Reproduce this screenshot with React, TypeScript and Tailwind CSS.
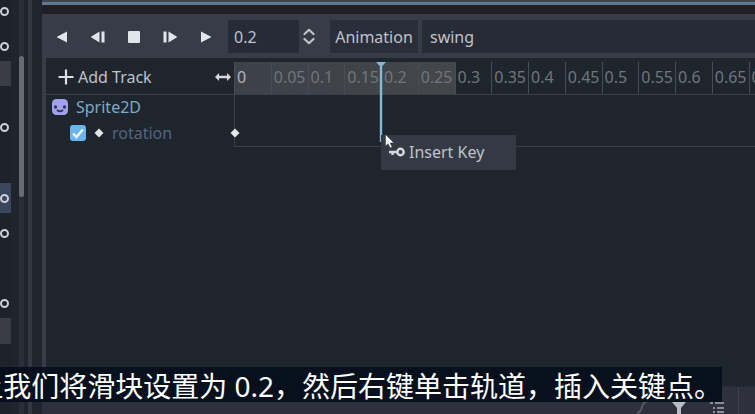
import React from "react";

const TICKS = [
  "0", "0.05", "0.1", "0.15", "0.2", "0.25", "0.3", "0.35",
  "0.4", "0.45", "0.5", "0.55", "0.6", "0.65", "0.7", "0.75",
];

const DOCK_ROWS: { size: string; dot: boolean }[] = [
  { size: "h-[22px]", dot: true },
  { size: "h-[9px]", dot: false },
  { size: "h-[30px]", dot: true },
  { size: "h-[25px] bg-[#3a3d45]", dot: false },
  { size: "h-[26px]", dot: false },
  { size: "h-[30px]", dot: true },
  { size: "h-[41px]", dot: false },
  { size: "h-[30px] bg-[#3a465b]", dot: true },
  { size: "h-[5px]", dot: false },
  { size: "h-[30px]", dot: true },
  { size: "h-[40px]", dot: false },
  { size: "h-[30px]", dot: true },
  { size: "h-[26px] bg-[#3a3d45]", dot: false },
];

function Dock() {
  return (
    <aside className="flex w-[42px] shrink-0 bg-[#1f242d]">
      <div className="w-[11px] bg-[#1e232b]">
        {DOCK_ROWS.map((row, i) => (
          <div key={i} className={`flex items-center ${row.size}`}>
            {row.dot && <span className="size-[9px] rounded-full border-2 border-[#cdd0d6]" />}
          </div>
        ))}
      </div>
      <div className="ml-2 w-[5px] bg-[#2a2e38] pt-14">
        <div className="h-[141px] rounded-sm bg-[#666b74]" />
      </div>
      <div className="ml-1 w-1 bg-[#323741]" />
    </aside>
  );
}

function IconButton({ label, children }: { label: string; children: React.ReactNode }) {
  return (
    <button type="button" aria-label={label} className="flex h-9 w-9 items-center justify-center">
      <svg width="16" height="16" viewBox="0 0 16 16" fill="#e2e5eb">
        {children}
      </svg>
    </button>
  );
}

function Toolbar() {
  return (
    <div className="flex h-11 items-center bg-[#383c47] pl-0.5 pt-px">
      <IconButton label="Play backwards">
        <path d="M13 2.5v11L3.4 8.6a.7.7 0 0 1 0-1.2z" />
      </IconButton>
      <IconButton label="Play backwards from current position">
        <path d="M9.500 2.500v11L1.4 8.6a.7.7 0 0 1 0-1.2zM11.500 2.500h3v11h-3z" />
      </IconButton>
      <IconButton label="Stop">
        <rect x="2" y="2" width="12" height="12" rx="1" />
      </IconButton>
      <IconButton label="Play from current position">
        <path d="M6.500 2.500v11l8.1-4.9a.7.7 0 0 0 0-1.2zM1.500 2.500h3v11h-3z" />
      </IconButton>
      <IconButton label="Play">
        <path d="M3 2.5v11l9.6-4.9a.7.7 0 0 0 0-1.2z" />
      </IconButton>
      <input
        aria-label="Current time"
        defaultValue="0.2"
        className="ml-1 h-[33px] w-[71px] bg-[#272b36] px-1.5 text-[#bfc2c9] outline-none"
      />
      <button type="button" aria-label="Adjust time" className="flex h-[33px] w-[19px] items-center justify-center">
        <svg width="12" height="17" viewBox="0 0 12 17" fill="none" stroke="#bfc2c9" strokeWidth="2.2" strokeLinejoin="round" strokeLinecap="round">
          <path d="M1.5 6L6 1.8L10.5 6M1.5 11L6 15.2L10.5 11" />
        </svg>
      </button>
      <button type="button" className="ml-3 h-[33px] w-[88px] bg-[#2a2e39] text-[#bfc2c9]">
        Animation
      </button>
      <select
        aria-label="Animation name"
        className="ml-1 h-[33px] min-w-0 flex-1 appearance-none bg-[#272b36] px-2 text-[#bfc2c9] outline-none"
      >
        <option>swing</option>
      </select>
    </div>
  );
}

function TrackNames() {
  return (
    <div className="w-[188px] shrink-0">
      <div className="flex h-[37px] items-center justify-between border-b border-[#3a3f49] pl-3 pr-[3px] pt-0.5">
        <button type="button" className="flex items-center gap-1 text-[#bfc2c9]">
          <svg width="16" height="16" viewBox="0 0 16 16" stroke="#dcdfe5" strokeWidth="2.2">
            <path d="M8 .5v15M.5 8h15" />
          </svg>
          Add Track
        </button>
        <svg width="16" height="10" viewBox="0 0 16 10" fill="#d5d8de">
          <path d="M0 5l4-4v2.800h8V1l4 4-4 4V6.200H4V9z" />
        </svg>
      </div>
      <div className="flex h-6 items-center gap-2 pl-1.5 text-[#7caac6]">
        <svg width="16" height="16" viewBox="0 0 16 16">
          <rect width="16" height="16" rx="4.500" fill="#a3a0ee" />
          <circle cx="3.500" cy="8" r="1.700" fill="#35365c" />
          <circle cx="12.500" cy="8" r="1.700" fill="#35365c" />
          <path d="M5 11q3 2.800 6 0" fill="none" stroke="#35365c" strokeWidth="1.800" />
        </svg>
        Sprite2D
      </div>
      <div className="flex h-7 items-center pl-6">
        <label className="flex items-center text-[#56647f]">
          <span className="grid">
            <input
              type="checkbox"
              defaultChecked
              className="col-start-1 row-start-1 size-4 appearance-none rounded-[3px] bg-[#6cb5ec]"
            />
            <svg width="16" height="16" viewBox="0 0 16 16" fill="none" stroke="#f4f8fc" strokeWidth="2.400" className="pointer-events-none col-start-1 row-start-1">
              <path d="M3 8.500l3.500 3.500L13 4.500" />
            </svg>
          </span>
          <svg width="10" height="10" viewBox="0 0 10 10" fill="#e4e6ea" className="ml-2 mr-2">
            <path d="M5 .5l4.500 4.500-4.500 4.500-4.500-4.500z" />
          </svg>
          rotation
        </label>
      </div>
    </div>
  );
}

function Timeline() {
  return (
    <div className="relative min-w-0 flex-1">
      <div className="h-[37px] overflow-hidden border-b border-[#3a3f49] pt-1">
        <div className="grid h-full w-[588px] grid-cols-16 bg-linear-to-r from-[#3d4149] to-[#43474a] bg-[length:222px_100%] bg-no-repeat">
          {TICKS.map((t, i) => (
            <div
              key={t}
              className={`flex items-center border-l border-[#484c55] pb-0.5 pl-0.5 ${i === 0 ? "text-[#b0b3ba]" : "text-[#71757d]"}`}
            >
              {t}
            </div>
          ))}
        </div>
      </div>
      <div className="h-[52px] border-b border-l border-[#3a3f49]" />
      <svg width="10" height="10" viewBox="0 0 10 10" fill="#e4e6ea" className="absolute -left-1 top-[70px]">
        <path d="M5 .5l4.500 4.500-4.500 4.500-4.500-4.500z" />
      </svg>
      <svg width="12" height="80" viewBox="0 0 12 80" fill="#83bad6" className="absolute left-[141px] top-1">
        <path d="M1 0h10L7.200 4v76H4.800V4z" />
      </svg>
      <button
        type="button"
        className="absolute left-[147px] top-[77px] flex h-[35px] w-[135px] items-center gap-1 bg-[#353944] pb-0.5 pl-2 text-[#bfc2c9]"
      >
        <svg width="16" height="16" viewBox="0 0 16 16" fill="none" stroke="#d5d8de">
          <circle cx="11.500" cy="8" r="3.200" strokeWidth="2.400" />
          <path d="M8 8H0M3.500 8v3" strokeWidth="2.400" />
        </svg>
        Insert Key
      </button>
      <svg width="11" height="15" viewBox="0 0 11 15" fill="#fff" stroke="#30343d" strokeWidth=".5" className="absolute left-[151px] top-[76px]">
        <path d="M.5.5v11.500l2.600-2.300 2 4.300 2-.9-2-4.200H9z" />
      </svg>
    </div>
  );
}

function BottomBar() {
  return (
    <div className="flex h-7 items-end justify-end overflow-hidden border-t border-[#282b35] bg-[#2e313c]">
      <svg width="18" height="14" viewBox="0 0 18 14" fill="none" stroke="#555967" strokeWidth="2" className="mr-5">
        <path d="M3 13q4-1 5-6t6-6" />
      </svg>
      <svg width="14" height="14" viewBox="0 0 14 14" fill="#b9bcc3" className="mr-6">
        <path d="M0 2h14L9 8v6H5V8z" />
      </svg>
      <svg width="14" height="14" viewBox="0 0 14 14" stroke="#8a8e98" strokeWidth="2" className="mr-3.5">
        <path d="M0 3h3M5 3h9M3 8h2M7 8h7M3 12h2M7 12h7" />
      </svg>
      <div className="mr-4 h-full w-px bg-[#3c404a]" />
    </div>
  );
}

export default function App() {
  return (
    <div className="relative flex h-screen overflow-hidden bg-[#1f252d] font-['Noto_Sans','Noto_Sans_CJK_SC',sans-serif] text-base leading-6">
      <Dock />
      <main className="flex min-w-0 flex-1 flex-col">
        <div className="h-[5px] border-b-[3px] border-[#607993] bg-[#3e434c]" />
        <div className="h-[9px] bg-[#211f26]" />
        <div className="flex min-h-0 flex-1 flex-col border-l-4 border-[#383c47]">
          <div className="-ml-1">
            <Toolbar />
          </div>
          <div className="flex min-h-0 flex-1">
            <TrackNames />
            <Timeline />
          </div>
        </div>
        <BottomBar />
      </main>
      <p className="absolute bottom-3 right-[33px] h-[35px] whitespace-nowrap bg-[#060f1c]/95 text-[28px] leading-[38px] text-white">
        让我们将滑块设置为 0.2，然后右键单击轨道，插入关键点。
      </p>
    </div>
  );
}
